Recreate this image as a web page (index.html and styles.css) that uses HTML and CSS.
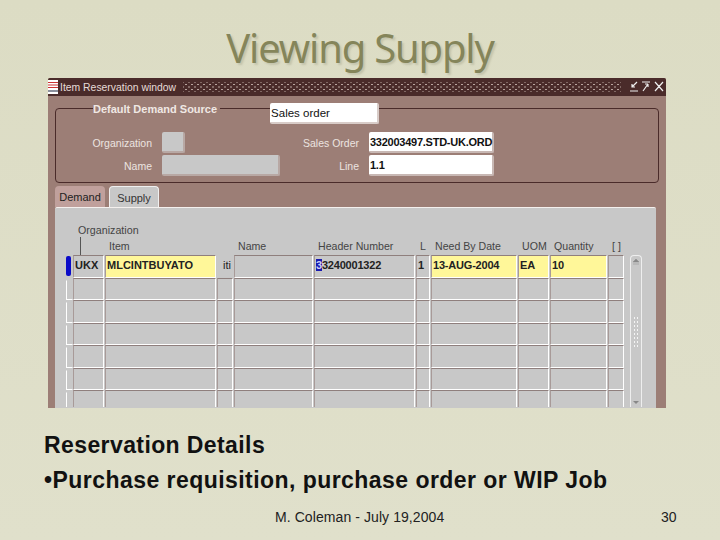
FILE: index.html
```html
<!DOCTYPE html>
<html lang="en">
<head>
    <meta charset="UTF-8">
    <title>Viewing Supply</title>
    <link rel="stylesheet" href="styles.css">
</head>
<body>
    <div class="slide">
        <h1 class="slide-title">Viewing Supply</h1>

        <div class="window">
            <div class="titlebar">
                <svg class="app-icon" width="10" height="14" viewBox="0 0 10 14">
                    <rect width="10" height="14" fill="#fff"/>
                    <rect y="2" width="10" height="1" fill="#c33"/>
                    <path d="M1 4v2M3 4v2M5 4v2M7 4v2M9 4v2" stroke="#c33"/>
                    <rect y="7" width="10" height="1" fill="#c33"/>
                    <rect y="10" width="10" height="2" fill="#8a8f9c"/>
                </svg>
                <span class="window-name">Item Reservation window</span>
                <span class="dots"></span>
                <svg class="win-controls" width="35" height="12" viewBox="0 0 35 12">
                    <path d="M8 1 3 6M3 3v3h3M1 10h8M13 1h8M19 3v3M19 3h-3M19 3l-5 7M26 1l8 9M34 1l-8 9" fill="none" stroke="#eee" stroke-width="1.2"/>
                </svg>
            </div>

            <div class="window-body">
                <div class="source-group">
                    <div class="source-head">
                        <span class="source-legend">Default Demand Source</span>
                        <span class="field select">Sales order</span>
                    </div>
                    <div class="source-rows">
                        <div class="form-col">
                            <div class="form-row">
                                <label class="form-label">Organization</label>
                                <span class="field off small"></span>
                            </div>
                            <div class="form-row">
                                <label class="form-label">Name</label>
                                <span class="field off wide"></span>
                            </div>
                        </div>
                        <div class="form-col right">
                            <div class="form-row">
                                <label class="form-label">Sales Order</label>
                                <span class="field order">332003497.STD-UK.ORD</span>
                            </div>
                            <div class="form-row">
                                <label class="form-label">Line</label>
                                <span class="field order">1.1</span>
                            </div>
                        </div>
                    </div>
                </div>

                <div class="tabs">
                    <span class="tab">Demand</span>
                    <span class="tab active">Supply</span>
                </div>

                <div class="tab-panel">
                    <div class="org-label">Organization</div>
                    <div class="table-wrap">
                        <div class="table">
                            <div class="th"></div>
                            <div class="th tick"></div>
                            <div class="th">Item</div>
                            <div class="th"></div>
                            <div class="th">Name</div>
                            <div class="th">Header Number</div>
                            <div class="th">L</div>
                            <div class="th">Need By Date</div>
                            <div class="th">UOM</div>
                            <div class="th">Quantity</div>
                            <div class="th">[ ]</div>

                            <div class="marker current"></div>
                            <div class="cell bold">UKX</div>
                            <div class="cell req bold">MLCINTBUYATO</div>
                            <div class="cell clip">iti</div>
                            <div class="cell"></div>
                            <div class="cell num"><span class="caret">3</span>3240001322</div>
                            <div class="cell bold">1</div>
                            <div class="cell req num">13-AUG-2004</div>
                            <div class="cell req bold">EA</div>
                            <div class="cell req num">10</div>
                            <div class="cell"></div>

                            <div class="marker"></div><div class="cell"></div><div class="cell"></div><div class="cell"></div><div class="cell"></div><div class="cell"></div><div class="cell"></div><div class="cell"></div><div class="cell"></div><div class="cell"></div><div class="cell"></div>
                            <div class="marker"></div><div class="cell"></div><div class="cell"></div><div class="cell"></div><div class="cell"></div><div class="cell"></div><div class="cell"></div><div class="cell"></div><div class="cell"></div><div class="cell"></div><div class="cell"></div>
                            <div class="marker"></div><div class="cell"></div><div class="cell"></div><div class="cell"></div><div class="cell"></div><div class="cell"></div><div class="cell"></div><div class="cell"></div><div class="cell"></div><div class="cell"></div><div class="cell"></div>
                            <div class="marker"></div><div class="cell"></div><div class="cell"></div><div class="cell"></div><div class="cell"></div><div class="cell"></div><div class="cell"></div><div class="cell"></div><div class="cell"></div><div class="cell"></div><div class="cell"></div>
                            <div class="marker"></div><div class="cell"></div><div class="cell"></div><div class="cell"></div><div class="cell"></div><div class="cell"></div><div class="cell"></div><div class="cell"></div><div class="cell"></div><div class="cell"></div><div class="cell"></div>
                            <div class="marker"></div><div class="cell"></div><div class="cell"></div><div class="cell"></div><div class="cell"></div><div class="cell"></div><div class="cell"></div><div class="cell"></div><div class="cell"></div><div class="cell"></div><div class="cell"></div>
                        </div>
                        <div class="scrollbar">
                            <svg width="10" height="10" viewBox="0 0 10 10"><path d="M2 6h6L5 3zM2 8h6" fill="#888" stroke="#888" stroke-width=".5"/></svg>
                            <span class="grip"></span>
                            <svg width="10" height="10" viewBox="0 0 10 10"><path d="M2 4h6L5 7z" fill="#888"/></svg>
                        </div>
                    </div>
                </div>
            </div>
        </div>

        <div class="notes">
            <p class="note-head">Reservation Details</p>
            <p class="note-item">•Purchase requisition, purchase order or WIP Job</p>
        </div>

        <div class="footer">
            <span class="footer-text">M. Coleman - July 19,2004</span>
            <span class="page-no">30</span>
        </div>
    </div>
</body>
</html>
```

FILE: styles.css
```css
* {
    box-sizing: border-box;
}

body {
    margin: 0;
    font-family: "Liberation Sans", Arial, sans-serif;
}

.slide {
    width: 720px;
    height: 540px;
    overflow: hidden;
    background: linear-gradient(#dcdcc4, #e0e0cb);
    display: flex;
    flex-direction: column;
}

.slide-title {
    margin: 0;
    height: 78px;
    padding-top: 23px;
    text-align: center;
    font-family: "Noto Sans", sans-serif;
    font-weight: normal;
    font-size: 40px;
    line-height: 50px;
    letter-spacing: -1.2px;
    white-space: nowrap;
    color: #85855a;
    text-shadow: 2px 2px 2px #c4c4ac;
}

.window {
    width: 618px;
    height: 330px;
    margin-left: 48px;
    flex: none;
    overflow: hidden;
    background: #9c7e76;
    border-radius: 2px 2px 0 0;
}

.titlebar {
    height: 18px;
    display: flex;
    align-items: center;
    background: #4a2b2a;
    color: #e6dcd8;
    font-size: 10.4px;
}

.app-icon {
    flex: none;
}

.window-name {
    margin-left: 2px;
    white-space: nowrap;
}

.dots {
    flex: 1;
    height: 10px;
    margin: 0 8px 0 7px;
    background-image:
        radial-gradient(#b8a49e 0.6px, transparent 0.9px),
        radial-gradient(#b8a49e 0.6px, transparent 0.9px);
    background-size: 6px 5px;
    background-position: 0 0, 3px 2.5px;
}

.win-controls {
    margin-right: 2px;
    flex: none;
}

.window-body {
    padding: 7px 7px 0;
}

.source-group {
    height: 75px;
    margin-top: 5px;
    border: 1px solid #4a2b2a;
    border-radius: 4px;
}

.source-head {
    height: 24px;
    margin-top: -6px;
    display: flex;
    align-items: flex-start;
}

.source-legend {
    margin-left: 37px;
    padding: 0 3px 0 0;
    height: 14px;
    line-height: 13px;
    background: #9c7e76;
    color: #f0e8e4;
    font-size: 11px;
    font-weight: bold;
    white-space: nowrap;
}

.field {
    display: block;
    height: 21px;
    line-height: 20px;
    padding-left: 1px;
    font-size: 11.5px;
    color: #111;
    background: #fff;
    border-radius: 2px;
    border-right: 2px solid #c8b8b4;
    border-bottom: 2px solid #c8b8b4;
    white-space: nowrap;
}

.select {
    width: 109px;
    margin-left: 50px;
    border-color: #d8ccc8;
}

.source-rows {
    display: flex;
    margin-top: 5px;
}

.form-col {
    display: flex;
    flex-direction: column;
    gap: 2px;
}

.form-col.right {
    margin-left: 9px;
}

.form-row {
    display: flex;
    align-items: center;
    gap: 10px;
}

.form-label {
    width: 96px;
    text-align: right;
    font-size: 10.5px;
    color: #ece4e0;
}

.form-col.right .form-label {
    width: 70px;
    white-space: nowrap;
}

.field.off {
    background: #c8c8c8;
    border-color: #b8a8a4;
}

.small {
    width: 23px;
}

.wide {
    width: 118px;
}

.order {
    width: 125px;
    font-weight: bold;
    font-size: 11px;
    letter-spacing: -0.25px;
}

.tabs {
    display: flex;
    gap: 4px;
    height: 21px;
    margin-top: 3px;
}

.tab {
    height: 21px;
    width: 50px;
    text-align: center;
    font-size: 11px;
    line-height: 23px;
    color: #222;
    background: #c0a09c;
    border-radius: 4px 4px 0 0;
}

.tab.active {
    background: #c8c8c8;
    color: #333;
    border: 1px solid #f0f0f0;
    border-bottom: 0;
}

.tab-panel {
    width: 601px;
    height: 210px;
    padding: 15px 10px 0 10px;
    background: #c8c8c8;
    border-top: 1px solid #f4f0ee;
    border-radius: 2px 2px 0 0;
}

.org-label {
    margin-left: 13px;
    height: 14px;
    line-height: 14px;
    font-size: 10.7px;
    color: #444;
}

.table-wrap {
    display: flex;
    height: 170px;
    overflow: hidden;
}

.table {
    display: grid;
    grid-template-columns: 8px 32px 112px 17px 80px 102px 15px 87px 32px 58px 17px;
    grid-template-rows: 18px repeat(7, 22.5px);
    width: 560px;
    flex: none;
}

.th {
    font-size: 10.6px;
    line-height: 18px;
    color: #444;
    padding-left: 4px;
    white-space: nowrap;
}

.tick {
    border-left: 1px solid #555;
    margin-left: 7px;
}

.cell {
    margin-right: 1px;
    border-top: 1px solid #8f7f7d;
    border-left: 1px solid #a89a98;
    border-right: 1px solid #fff;
    border-bottom: 1px solid #fff;
    font-size: 11px;
    line-height: 19px;
    padding-left: 1px;
    color: #222;
    white-space: nowrap;
    overflow: hidden;
}

.bold {
    font-weight: bold;
}

.num {
    font-weight: bold;
    letter-spacing: -0.2px;
}

.req {
    background: #fff799;
}

.clip {
    border-color: transparent;
    text-align: right;
    padding-right: 1px;
}

.caret {
    background: #1a1ab0;
    color: #cfd0f5;
}

.marker {
    border: 1px solid transparent;
    border-left-color: #fff;
    border-bottom-color: #fff;
    margin: 2px 0 0 1px;
}

.marker.current {
    background: #0a0ac8;
    border: 0;
    border-radius: 2px;
    margin: 1px 2px 2px 1px;
}

.scrollbar {
    width: 12px;
    margin: 18px 0 0 5px;
    flex: none;
    border: 1px solid #eee;
    border-bottom: 0;
    border-radius: 4px 4px 0 0;
    display: flex;
    flex-direction: column;
    align-items: center;
    justify-content: space-between;
}

.grip {
    width: 6px;
    height: 32px;
    background-image: radial-gradient(#f4f4f4 0.8px, transparent 1px);
    background-size: 3px 4px;
}

.notes {
    margin: 20px 0 0 44px;
}

.note-head,
.note-item {
    margin: 0;
    font-weight: bold;
    font-size: 23px;
    letter-spacing: 0.4px;
    color: #111;
    white-space: nowrap;
}

.note-head {
    line-height: 34px;
}

.note-item {
    line-height: 36px;
    letter-spacing: 0.45px;
}

.footer {
    display: flex;
    margin-top: 11px;
    font-size: 14px;
    letter-spacing: 0.08px;
    color: #222;
}

.footer-text {
    margin-left: 275px;
    width: 386px;
}
```
